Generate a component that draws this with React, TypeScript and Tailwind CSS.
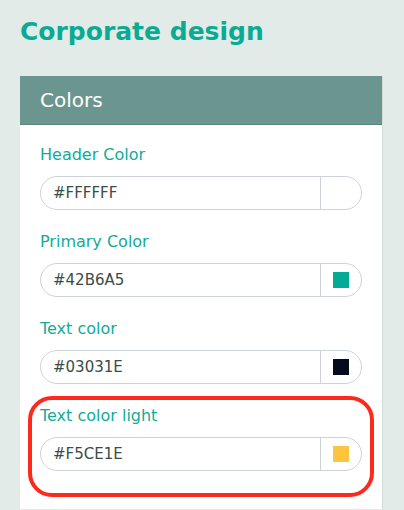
import React from 'react';

const fields = [
  { label: 'Header Color', value: '#FFFFFF', swatch: '' },
  { label: 'Primary Color', value: '#42B6A5', swatch: 'bg-[#03ab97]' },
  { label: 'Text color', value: '#03031E', swatch: 'bg-[#050a1c]' },
  { label: 'Text color light', value: '#F5CE1E', swatch: 'bg-[#fdc43f]', highlight: true },
];

const font = { fontFamily: '"DejaVu Sans", sans-serif' };

const ColorField = ({ label, value, swatch, highlight }: { label: string; value: string; swatch: string; highlight?: boolean }) => (
  <div className="relative mb-[22px]">
    {highlight && (
      <div className="absolute -left-3 -right-3 -top-[10px] -bottom-[26px] rounded-[24px] border-[4px] border-[#fb2a1c]" />
    )}
    <div className="text-[16px] leading-[20px] text-[#12ab96] mb-[11px]">{label}</div>
    <div className="flex h-[34px] rounded-full border border-[#cdd3d7] bg-white">
      <div className="flex-1 flex items-center pl-[12px] text-[15px] text-[#3a4c48]">{value}</div>
      <div className="w-[41px] border-l border-[#cdd3d7] flex items-center justify-center">
        {swatch && <div className={`w-4 h-4 ${swatch}`} />}
      </div>
    </div>
  </div>
);

export default function App() {
  return (
    <div className="h-[510px] overflow-hidden bg-[#e2ebe8] px-5 pt-[15px]" style={font}>
      <h1 className="text-[25px] leading-[33px] font-bold text-[#0aab94] mb-[28px]">Corporate design</h1>
      <div className="w-[363px] bg-white border-r border-[#d3dbd8]">
        <div className="h-[49px] bg-[#6b9690] border-b border-[#5a847e] flex items-center px-5 text-[20px] text-white">
          Colors
        </div>
        <div className="px-5 pt-5 pb-4">
          {fields.map((f) => (
            <ColorField key={f.label} {...f} />
          ))}
        </div>
      </div>
    </div>
  );
}
